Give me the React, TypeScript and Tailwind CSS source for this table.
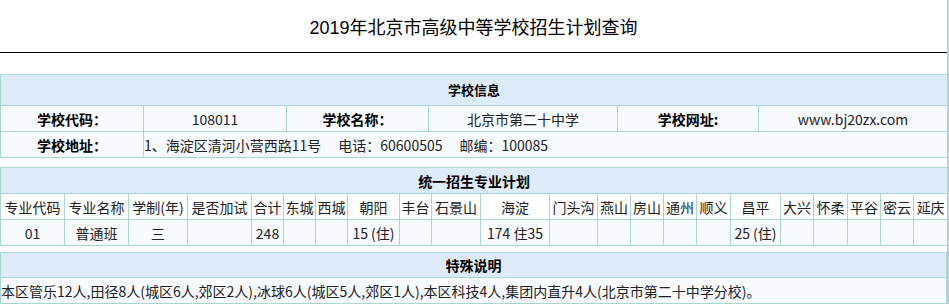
const border = "border border-[#aad8d0]";

const districts = [
  ["专业代码", 64, "01"],
  ["专业名称", 64, "普通班"],
  ["学制(年)", 59, "三"],
  ["是否加试", 64, ""],
  ["合计", 32, "248"],
  ["东城", 32, ""],
  ["西城", 32, ""],
  ["朝阳", 52, "15 (住)"],
  ["丰台", 32, ""],
  ["石景山", 49, ""],
  ["海淀", 69, "174 住35"],
  ["门头沟", 48, ""],
  ["燕山", 33, ""],
  ["房山", 33, ""],
  ["通州", 33, ""],
  ["顺义", 34, ""],
  ["昌平", 50, "25 (住)"],
  ["大兴", 33, ""],
  ["怀柔", 34, ""],
  ["平谷", 33, ""],
  ["密云", 33, ""],
  ["延庆", 34, ""],
] as const;

function SectionHead({ title, span, size = "text-[14px]", h = "h-[26px]" }: { title: string; span: number; size?: string; h?: string }) {
  return (
    <tr className={`${h} bg-[#deebfb]`}>
      <td colSpan={span} className={`${border} text-center font-bold text-black ${size}`}>
        {title}
      </td>
    </tr>
  );
}

export default function App() {
  return (
    <div
      className="w-[949px] h-[304px] bg-white border-r-2 border-[#aad8d0] overflow-hidden text-[14px] leading-[18px] text-[#222]"
      style={{ fontFamily: '"Noto Sans CJK SC", "Noto Sans", sans-serif' }}
    >
      {/* 标题 */}
      <div className="w-[947px] h-[53px] flex items-center justify-center pt-[4px] border-b border-black">
        <h1
          className="text-[18px] text-black"
          style={{ fontFamily: '"Liberation Sans", "Noto Sans CJK SC", sans-serif' }}
        >
          2019年北京市高级中等学校招生计划查询
        </h1>
      </div>

      {/* 学校信息 */}
      <table className={`mt-[21px] w-[947px] table-fixed ${border}`}>
        <colgroup>
          <col className="w-[143px]" />
          <col className="w-[143px]" />
          <col className="w-[142px]" />
          <col className="w-[189px]" />
          <col className="w-[141px]" />
          <col className="w-[189px]" />
        </colgroup>
        <tbody>
          <SectionHead title="学校信息" span={6} size="text-[13px]" h="h-[31px]" />
          <tr className="h-[26px] bg-[#f8fbff]">
            <td className={`${border} text-center font-bold text-black`}>学校代码：</td>
            <td className={`${border} text-center`}>108011</td>
            <td className={`${border} text-center font-bold text-black`}>学校名称：</td>
            <td className={`${border} text-center`}>北京市第二十中学</td>
            <td className={`${border} text-center font-bold text-black`}>学校网址:</td>
            <td className={`${border} text-center`}>www.bj20zx.com</td>
          </tr>
          <tr className="h-[26px] bg-[#f8fbff]">
            <td className={`${border} text-center font-bold text-black`}>学校地址：</td>
            <td colSpan={5} className={`${border} text-left`}>
              1、海淀区清河小营西路11号
              <span className="ml-[17px]">电话：60600505</span>
              <span className="ml-[17px]">邮编：100085</span>
            </td>
          </tr>
        </tbody>
      </table>

      {/* 统一招生专业计划 */}
      <table className={`mt-[9px] w-[947px] table-fixed ${border}`}>
        <colgroup>
          {districts.map(([name, w]) => (
            <col key={name} style={{ width: w }} />
          ))}
        </colgroup>
        <tbody>
          <SectionHead title="统一招生专业计划" span={districts.length} />
          <tr className="h-[26px] bg-white">
            {districts.map(([name]) => (
              <td key={name} className={`${border} text-center whitespace-nowrap text-[#222]`}>
                {name}
              </td>
            ))}
          </tr>
          <tr className="h-[26px] bg-[#f8fbff]">
            {districts.map(([name, , v]) => (
              <td key={name} className={`${border} text-center whitespace-nowrap`}>
                {v}
              </td>
            ))}
          </tr>
        </tbody>
      </table>

      {/* 特殊说明 */}
      <table className={`mt-[6px] w-[947px] table-fixed ${border}`}>
        <tbody>
          <SectionHead title="特殊说明" span={1} h="h-[25px]" />
          <tr className="h-[26px] bg-[#f8fbff]">
            <td className={`${border} text-left whitespace-nowrap`}>
              本区管乐12人,田径8人(城区6人,郊区2人),冰球6人(城区5人,郊区1人),本区科技4人,集团内直升4人(北京市第二十中学分校)。
            </td>
          </tr>
        </tbody>
      </table>
    </div>
  );
}
